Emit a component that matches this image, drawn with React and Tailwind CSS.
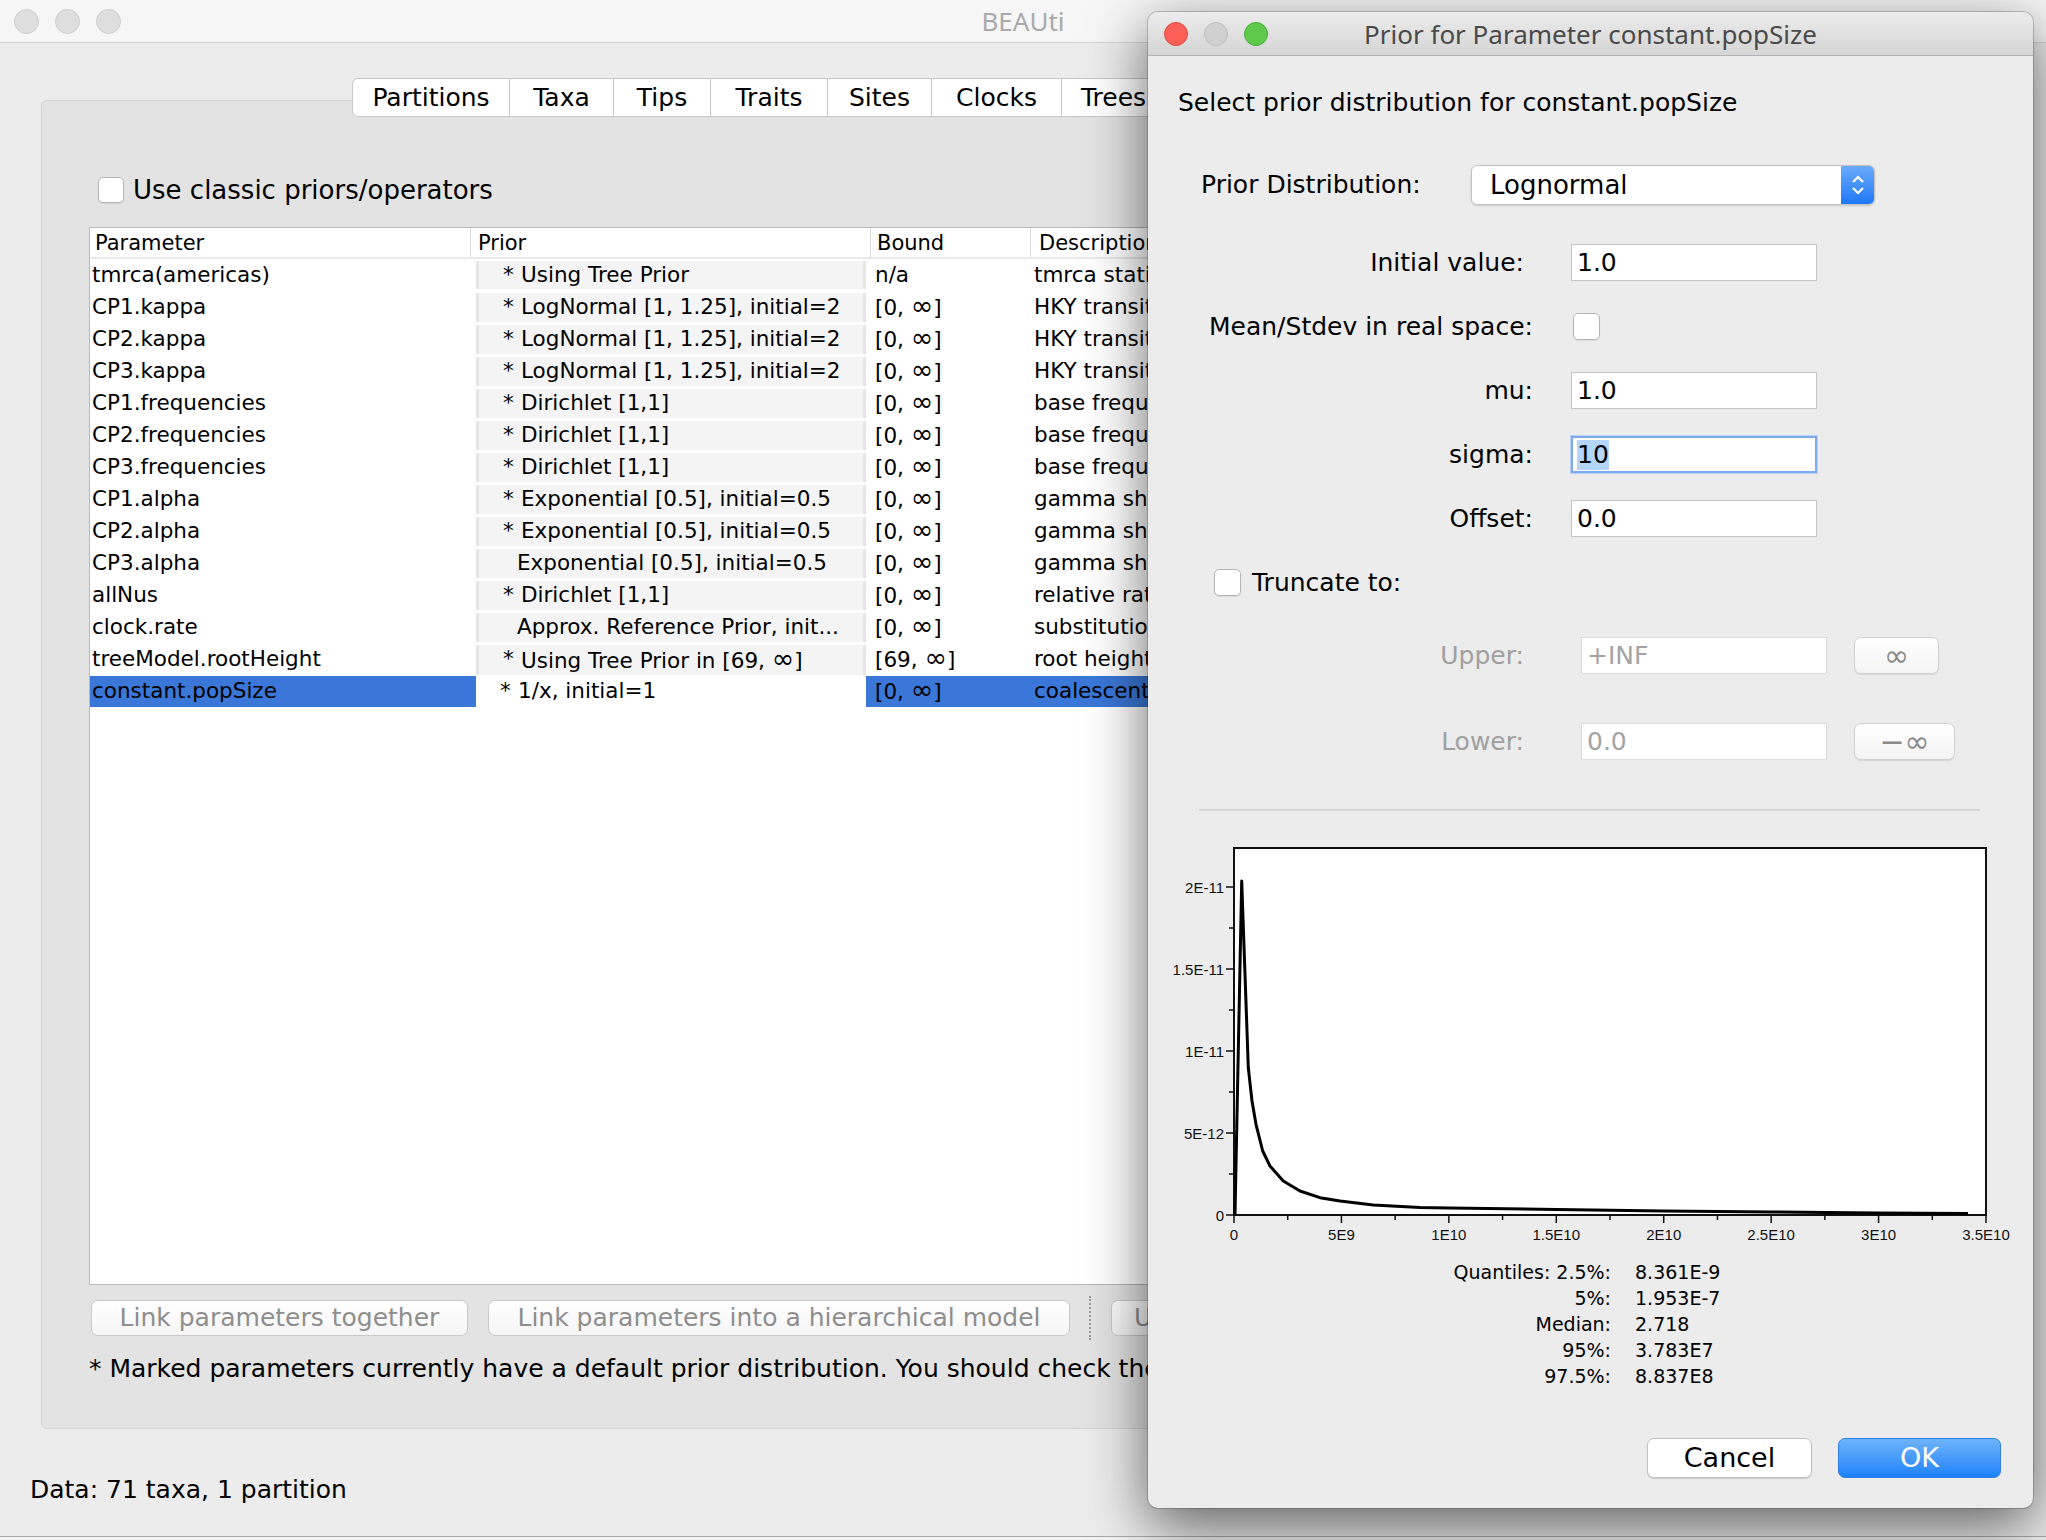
import React from 'react';

const rows = [
  ['tmrca(americas)', true, 'Using Tree Prior', 'n/a', 'tmrca statistic'],
  ['CP1.kappa', true, 'LogNormal [1, 1.25], initial=2', '[0, ∞]', 'HKY transition-transversion parameter'],
  ['CP2.kappa', true, 'LogNormal [1, 1.25], initial=2', '[0, ∞]', 'HKY transition-transversion parameter'],
  ['CP3.kappa', true, 'LogNormal [1, 1.25], initial=2', '[0, ∞]', 'HKY transition-transversion parameter'],
  ['CP1.frequencies', true, 'Dirichlet [1,1]', '[0, ∞]', 'base frequencies'],
  ['CP2.frequencies', true, 'Dirichlet [1,1]', '[0, ∞]', 'base frequencies'],
  ['CP3.frequencies', true, 'Dirichlet [1,1]', '[0, ∞]', 'base frequencies'],
  ['CP1.alpha', true, 'Exponential [0.5], initial=0.5', '[0, ∞]', 'gamma shape parameter'],
  ['CP2.alpha', true, 'Exponential [0.5], initial=0.5', '[0, ∞]', 'gamma shape parameter'],
  ['CP3.alpha', false, 'Exponential [0.5], initial=0.5', '[0, ∞]', 'gamma shape parameter'],
  ['allNus', true, 'Dirichlet [1,1]', '[0, ∞]', 'relative rates'],
  ['clock.rate', false, 'Approx. Reference Prior, init...', '[0, ∞]', 'substitution rate'],
  ['treeModel.rootHeight', true, 'Using Tree Prior in [69, ∞]', '[69, ∞]', 'root height of the tree'],
  ['constant.popSize', true, '1/x, initial=1', '[0, ∞]', 'coalescent population size parameter'],
];

const tabs = [
  ['Partitions', 'w-[158px] rounded-l-[6px] border-l'],
  ['Taxa', 'w-[104px]'],
  ['Tips', 'w-[97px]'],
  ['Traits', 'w-[117px]'],
  ['Sites', 'w-[104px]'],
  ['Clocks', 'w-[130px]'],
  ['Trees', 'w-[104px]'],
];

const quantiles = [
  ['Quantiles: 2.5%:', '8.361E-9'],
  ['5%:', '1.953E-7'],
  ['Median:', '2.718'],
  ['95%:', '3.783E7'],
  ['97.5%:', '8.837E8'],
];

const curve = [
  [1235, 1214], [1241.7, 880], [1248.3, 1066.7], [1252, 1100], [1256, 1123.3], [1262.7, 1150],
  [1270, 1165], [1283.3, 1180], [1300, 1190], [1320, 1196.7], [1340, 1200], [1373.3, 1204],
  [1420, 1206.5], [1449, 1207], [1557, 1208.5], [1664, 1210], [1771, 1211], [1878, 1212], [1968, 1212.5],
];

// bigger infinity glyph, as in the Lucida rendering
function Inf({ text }) {
  const parts = text.split('∞');
  if (parts.length === 1) return text;
  return (
    <>
      {parts[0]}
      <span className="text-[27px] leading-none">∞</span>
      {parts[1]}
    </>
  );
}

function Checkbox({ className = '' }) {
  return <div className={`w-[26px] h-[26px] rounded-[5px] border border-[#b5b5b5] bg-white shadow-[0_1px_1px_rgba(0,0,0,0.08)] ${className}`} />;
}

function Field({ value, disabled, focused, className = '' }) {
  if (focused) {
    return (
      <div className={`h-[37px] w-[246px] bg-white border-2 border-[#80aaf0] shadow-[0_0_0_1px_#b9d1f7] flex items-center pl-[4px] text-[25px] ${className}`}>
        <span className="bg-[#b4d5fe] leading-[30px]">{value}</span>
      </div>
    );
  }
  return (
    <div className={`h-[37px] w-[246px] bg-white border flex items-center pl-[5px] text-[25px] ${disabled ? 'border-[#dcdcdc] text-[#a3a3a3]' : 'border-[#c4c4c4] text-black'} ${className}`}>
      {value}
    </div>
  );
}

function Chart() {
  const yt = [[886, '2E-11'], [968, '1.5E-11'], [1050, '1E-11'], [1132, '5E-12'], [1214, '0']];
  const xl = ['0', '5E9', '1E10', '1.5E10', '2E10', '2.5E10', '3E10', '3.5E10'];
  const step = (1986 - 1234) / 7;
  return (
    <svg width="860" height="420" viewBox="1160 830 860 420" className="block ml-[12px]">
      <rect x="1234" y="847" width="752" height="367" fill="white" stroke="#111" strokeWidth="2" />
      {yt.map(([y, t]) => (
        <g key={t}>
          <line x1="1226" y1={y} x2="1234" y2={y} stroke="#111" strokeWidth="1.5" />
          <text x="1224" y={y} textAnchor="end" dominantBaseline="central" fontSize="15" fontFamily="Liberation Sans, sans-serif" fill="#111">{t}</text>
        </g>
      ))}
      {[927, 1009, 1091, 1173].map((y) => (
        <line key={y} x1="1229" y1={y} x2="1234" y2={y} stroke="#111" strokeWidth="1.5" />
      ))}
      {xl.map((t, i) => {
        const x = 1234 + i * step;
        return (
          <g key={t}>
            <line x1={x} y1="1214" x2={x} y2="1222" stroke="#111" strokeWidth="1.5" />
            <text x={x} y="1233" textAnchor="middle" dominantBaseline="central" fontSize="15" fontFamily="Liberation Sans, sans-serif" fill="#111">{t}</text>
          </g>
        );
      })}
      {[0, 1, 2, 3, 4, 5, 6].map((i) => {
        const x = 1234 + (i + 0.5) * step;
        return <line key={i} x1={x} y1="1214" x2={x} y2="1219" stroke="#111" strokeWidth="1.5" />;
      })}
      <polyline points={curve.map((p) => p.join(',')).join(' ')} fill="none" stroke="#000" strokeWidth="3" strokeLinejoin="round" />
    </svg>
  );
}

function Dialog() {
  return (
    <div className="absolute z-20 left-[1148px] top-[12px] w-[885px] h-[1496px] rounded-[10px] bg-[#ececec] overflow-hidden shadow-[0_18px_60px_rgba(0,0,0,0.6),0_0_0_1px_rgba(0,0,0,0.18)] flex flex-col">
      {/* title bar */}
      <div className="h-[44px] shrink-0 bg-gradient-to-b from-[#ececec] to-[#d5d5d5] border-b border-[#b3b3b3] grid grid-cols-[1fr_auto_1fr] items-center">
        <div className="flex items-center pl-[16px] gap-[16px]">
          <div className="w-[24px] h-[24px] rounded-full bg-[#fc5f57] border border-[#de4a43]" />
          <div className="w-[24px] h-[24px] rounded-full bg-[#d0d0d0] border border-[#bdbdbd]" />
          <div className="w-[24px] h-[24px] rounded-full bg-[#5fc94b] border border-[#45ad37]" />
        </div>
        <div className="font-['Noto_Sans',sans-serif] text-[26px] text-[#4a4a4a] leading-none">Prior for Parameter constant.popSize</div>
        <div />
      </div>

      <div className="mt-[30px] pl-[30px] h-[34px] leading-[34px] text-[25px]">Select prior distribution for constant.popSize</div>

      <div className="mt-[45px] h-[40px] flex items-center">
        <div className="pl-[53px] w-[323px] text-[25px]">Prior Distribution:</div>
        <div className="w-[404px] h-[40px] rounded-[6px] bg-white border border-[#c3c3c3] shadow-[0_1px_2px_rgba(0,0,0,0.15)] flex items-center overflow-hidden">
          <div className="flex-1 pl-[18px] text-[26px]">Lognormal</div>
          <div className="w-[33px] h-full bg-gradient-to-b from-[#6aaafc] to-[#1b78f7] flex items-center justify-center">
            <svg width="16" height="26" viewBox="0 0 16 26">
              <path d="M3 10 L8 5 L13 10" fill="none" stroke="white" strokeWidth="2.2" />
              <path d="M3 16 L8 21 L13 16" fill="none" stroke="white" strokeWidth="2.2" />
            </svg>
          </div>
        </div>
      </div>

      <div className="mt-[39px] flex flex-col gap-[27px] text-[25px]">
        <div className="h-[37px] flex items-center">
          <div className="w-[385px] pr-[9px] text-right">Initial value:</div>
          <Field value="1.0" className="ml-[38px]" />
        </div>
        <div className="h-[37px] flex items-center">
          <div className="w-[385px] text-right">Mean/Stdev in real space:</div>
          <Checkbox className="ml-[40px] h-[27px] w-[27px]" />
        </div>
        <div className="h-[37px] flex items-center">
          <div className="w-[385px] text-right">mu:</div>
          <Field value="1.0" className="ml-[38px]" />
        </div>
        <div className="h-[37px] flex items-center">
          <div className="w-[385px] text-right">sigma:</div>
          <Field value="10" focused className="ml-[38px]" />
        </div>
        <div className="h-[37px] flex items-center">
          <div className="w-[385px] text-right">Offset:</div>
          <Field value="0.0" className="ml-[38px]" />
        </div>
        <div className="h-[37px] flex items-center pl-[66px] gap-[11px]">
          <Checkbox className="h-[27px] w-[27px]" />
          <div>Truncate to:</div>
        </div>
      </div>

      <div className="mt-[36px] h-[37px] flex items-center text-[25px]">
        <div className="w-[376px] text-right text-[#a0a0a0]">Upper:</div>
        <Field value="+INF" disabled className="ml-[57px]" />
        <div className="ml-[27px] w-[85px] h-[37px] rounded-[7px] border border-[#d2d2d2] bg-gradient-to-b from-white to-[#f4f4f4] shadow-[0_1px_1px_rgba(0,0,0,0.1)] flex items-center justify-center text-[#8a8a8a] text-[30px]">∞</div>
      </div>
      <div className="mt-[49px] h-[37px] flex items-center text-[25px]">
        <div className="w-[376px] text-right text-[#a0a0a0]">Lower:</div>
        <Field value="0.0" disabled className="ml-[57px]" />
        <div className="ml-[27px] w-[101px] h-[37px] rounded-[7px] border border-[#d2d2d2] bg-gradient-to-b from-white to-[#f4f4f4] shadow-[0_1px_1px_rgba(0,0,0,0.1)] flex items-center justify-center text-[#8a8a8a] text-[30px]">−∞</div>
      </div>

      <div className="mt-[49px] ml-[51px] w-[781px] h-[2px] bg-[#d6d6d6]" />

      <div className="mt-[20px]">
        <Chart />
      </div>

      <div className="mt-[8px] grid grid-cols-[463px_auto] gap-x-[24px] text-[19px] leading-[26px]">
        {quantiles.map(([l, v]) => (
          <React.Fragment key={l}>
            <div className="text-right">{l}</div>
            <div>{v}</div>
          </React.Fragment>
        ))}
      </div>

      <div className="mt-[49px] flex justify-end pr-[32px] gap-[26px]">
        <div className="w-[165px] h-[40px] rounded-[7px] bg-white border border-[#c2c2c2] shadow-[0_1px_1px_rgba(0,0,0,0.15)] flex items-center justify-center text-[27px]">Cancel</div>
        <div className="w-[163px] h-[40px] rounded-[7px] bg-gradient-to-b from-[#6db3fb] to-[#1a82fa] border border-[#2f7fe6] flex items-center justify-center text-[27px] text-white">OK</div>
      </div>
    </div>
  );
}

export default function App() {
  return (
    <div className="w-[2046px] h-[1540px] relative overflow-hidden bg-[#ececec] font-['DejaVu_Sans',sans-serif] text-black">
      <div className="h-[1536px] flex flex-col">
        {/* main window title bar */}
        <div className="h-[43px] shrink-0 bg-[#f6f6f6] border-b border-[#d3d3d3] grid grid-cols-[1fr_auto_1fr] items-center">
          <div className="flex items-center pl-[14px] gap-[16px]">
            <div className="w-[25px] h-[25px] rounded-full bg-[#dedede] border border-[#cdcdcd]" />
            <div className="w-[25px] h-[25px] rounded-full bg-[#dedede] border border-[#cdcdcd]" />
            <div className="w-[25px] h-[25px] rounded-full bg-[#dedede] border border-[#cdcdcd]" />
          </div>
          <div className="font-['Noto_Sans',sans-serif] text-[26px] text-[#aaaaaa] leading-none">BEAUti</div>
          <div />
        </div>

        <div className="flex-1 flex flex-col">
          {/* tabs, the rest of the bar lies under the dialog */}
          <div className="mt-[35px] h-[39px] w-[1150px] pl-[352px] flex relative z-10 overflow-hidden">
            {tabs.map(([t, w]) => (
              <div key={t} className={`${w} shrink-0 h-[39px] bg-white border-y border-r border-[#c7c7c7] flex items-center justify-center text-[25px]`}>{t}</div>
            ))}
          </div>

          {/* tab panel */}
          <div className="-mt-[17px] ml-[41px] w-[1964px] h-[1329px] bg-[#e3e3e3] border border-[#d3d3d3] rounded-[6px] flex flex-col">
            <div className="mt-[76px] h-[26px] flex items-center pl-[56px] gap-[9px] text-[26px]">
              <Checkbox />
              <div>Use classic priors/operators</div>
            </div>

            <div className="mt-[24px] ml-[47px] w-[1061px] h-[1058px] bg-white border-l border-y border-[#b8b8b8] overflow-hidden">
              <div className="h-[29px] grid grid-cols-[380px_400px_160px_1fr] text-[21px] leading-[24px]">
                <div className="pl-[5px] pt-[3px]">Parameter</div>
                <div className="pl-[7px] pt-[3px] border-l border-[#dadada]">Prior</div>
                <div className="pl-[6px] pt-[3px] border-l border-[#dadada]">Bound</div>
                <div className="pl-[8px] pt-[3px] border-l border-[#dadada] overflow-hidden whitespace-nowrap">Description</div>
              </div>
              <div className="h-[2px] bg-[#e9e9e9]" />
              {rows.map(([p, star, prior, bound, desc], i) => {
                const sel = i === rows.length - 1;
                return (
                  <div key={p} className="h-[32px] grid grid-cols-[386px_390px_165px_1fr] text-[21.5px] whitespace-nowrap">
                    <div className={`pl-[2px] my-px leading-[30px] ${sel ? 'bg-[#3a77d8]' : ''}`}>{p}</div>
                    <div className={`my-[2px] leading-[28px] pl-[24px] flex ${sel ? 'bg-white' : 'bg-[#f4f4f4] border-l-[3px] border-r-[3px] border-[#e6e6e6]'}`}>
                      {star ? <span className="w-[18px]">*</span> : <span className="w-[14px]" />}
                      <span><Inf text={prior} /></span>
                    </div>
                    <div className={`pl-[9px] my-px leading-[30px] ${sel ? 'bg-[#3a77d8]' : ''}`}><Inf text={bound} /></div>
                    <div className={`pl-[3px] my-px leading-[30px] overflow-hidden ${sel ? 'bg-[#3a77d8]' : ''}`}>{desc}</div>
                  </div>
                );
              })}
            </div>

            <div className="mt-[11px] h-[44px] ml-[49px] w-[1059px] overflow-hidden flex items-center text-[25px] text-[#8e8e8e]">
              <div className="shrink-0 w-[377px] h-[36px] rounded-[7px] border border-[#cacaca] bg-gradient-to-b from-white to-[#f5f5f5] flex items-center justify-center">Link parameters together</div>
              <div className="shrink-0 ml-[20px] w-[582px] h-[36px] rounded-[7px] border border-[#cacaca] bg-gradient-to-b from-white to-[#f5f5f5] flex items-center justify-center">Link parameters into a hierarchical model</div>
              <div className="shrink-0 ml-[19px] h-[44px] border-l-2 border-dotted border-[#999999]" />
              <div className="shrink-0 ml-[20px] w-[300px] h-[36px] rounded-[7px] border border-[#cacaca] bg-gradient-to-b from-white to-[#f5f5f5] flex items-center justify-start pl-[22px]">Unlink parameters</div>
            </div>

            <div className="mt-[12px] ml-[47px] w-[1061px] overflow-hidden h-[34px] leading-[34px] text-[25px] whitespace-nowrap">* Marked parameters currently have a default prior distribution. You should check their priors are suitable.</div>
          </div>

          <div className="mt-[44px] pl-[30px] h-[34px] leading-[34px] text-[25px]">Data: 71 taxa, 1 partition</div>
        </div>
      </div>
      <div className="h-[4px] bg-[#f3f3f3] border-t border-[#a9a9a9]" />

      <Dialog />
    </div>
  );
}
